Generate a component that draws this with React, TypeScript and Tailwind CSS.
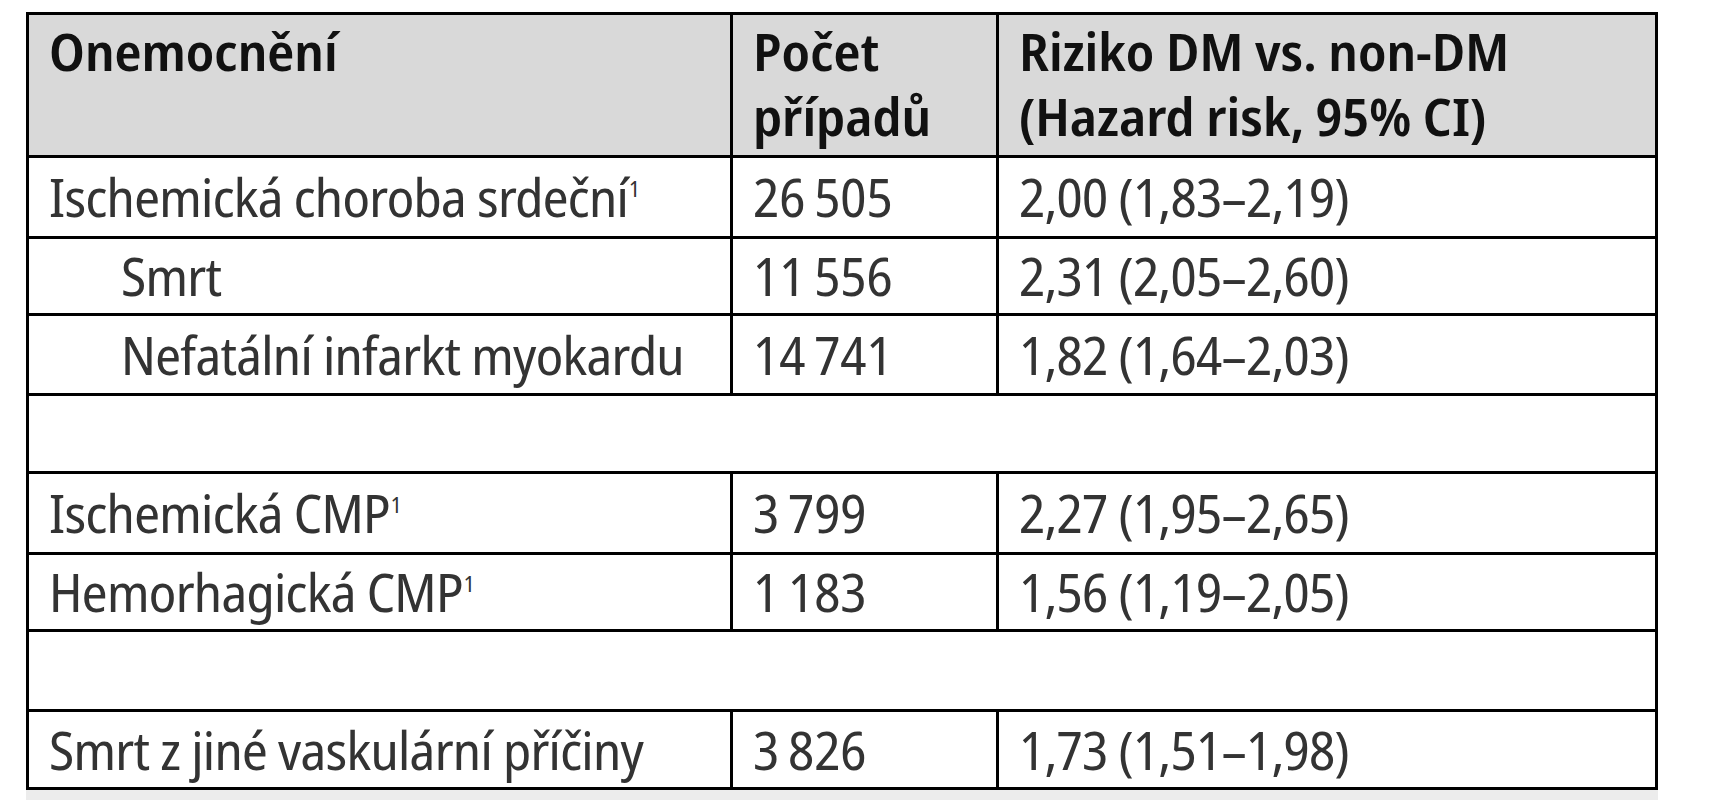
import React from 'react';

type Row = { name?: string; sup?: boolean; indent?: boolean; count?: string; risk?: string; h: string };

// counts use a narrow no-break space as thousands separator
const rows: Row[] = [
    { name: 'Ischemická choroba srdeční', sup: true, count: '26\u202F505', risk: '2,00 (1,83–2,19)', h: 'h-[81px]' },
    { name: 'Smrt', indent: true, count: '11\u202F556', risk: '2,31 (2,05–2,60)', h: 'h-[77px]' },
    { name: 'Nefatální infarkt myokardu', indent: true, count: '14\u202F741', risk: '1,82 (1,64–2,03)', h: 'h-[80px]' },
    { h: 'h-[78px]' },
    { name: 'Ischemická CMP', sup: true, count: '3\u202F799', risk: '2,27 (1,95–2,65)', h: 'h-[81px]' },
    { name: 'Hemorhagická CMP', sup: true, count: '1\u202F183', risk: '1,56 (1,19–2,05)', h: 'h-[77px]' },
    { h: 'h-[80px]' },
    { name: 'Smrt z jiné vaskulární příčiny', count: '3\u202F826', risk: '1,73 (1,51–1,98)', h: 'h-[78px]' },
];

export default function App() {
    return (
        <div className="min-h-screen bg-white pl-[26px] pt-[12px] font-['Noto_Sans_Display','Open_Sans',sans-serif] [font-stretch:condensed]">
            <table className="w-[1632px] table-fixed border-collapse border-[3px] border-black text-[53px] text-[#333]">
                <colgroup>
                    <col className="w-[704px]" />
                    <col className="w-[266px]" />
                    <col />
                </colgroup>
                <thead>
                    <tr className="h-[143px] bg-[#d9d9d9] text-left align-top leading-[65px] text-[#111]">
                        <th className="border-[3px] border-black px-[20px] pt-[3px] font-semibold">Onemocnění</th>
                        <th className="border-[3px] border-black px-[20px] pt-[3px] font-semibold">
                            Počet
                            <br />
                            případů
                        </th>
                        <th className="border-[3px] border-black px-[20px] pt-[3px] font-semibold">
                            Riziko DM vs. non-DM
                            <br />
                            (Hazard risk, 95% CI)
                        </th>
                    </tr>
                </thead>
                <tbody className="tracking-[-0.7px]">
                    {rows.map((r, i) =>
                        r.name ? (
                            <tr key={i} className={`${r.h} align-middle leading-[60px]`}>
                                <td className={`whitespace-nowrap border-[3px] border-black pr-[4px] ${r.indent ? 'pl-[92px]' : 'pl-[20px]'}`}>
                                    {r.name}
                                    {r.sup && <span className="ml-[1px] align-[20px] text-[22px] leading-none">1</span>}
                                </td>
                                <td className="whitespace-nowrap border-[3px] border-black px-[20px]">{r.count}</td>
                                <td className="whitespace-nowrap border-[3px] border-black px-[20px]">{r.risk}</td>
                            </tr>
                        ) : (
                            <tr key={i} className={r.h}>
                                <td colSpan={3} className="border-[3px] border-black" />
                            </tr>
                        )
                    )}
                </tbody>
            </table>
            <div className="h-[20px] w-[1632px] bg-[#ececec]" />
        </div>
    );
}
